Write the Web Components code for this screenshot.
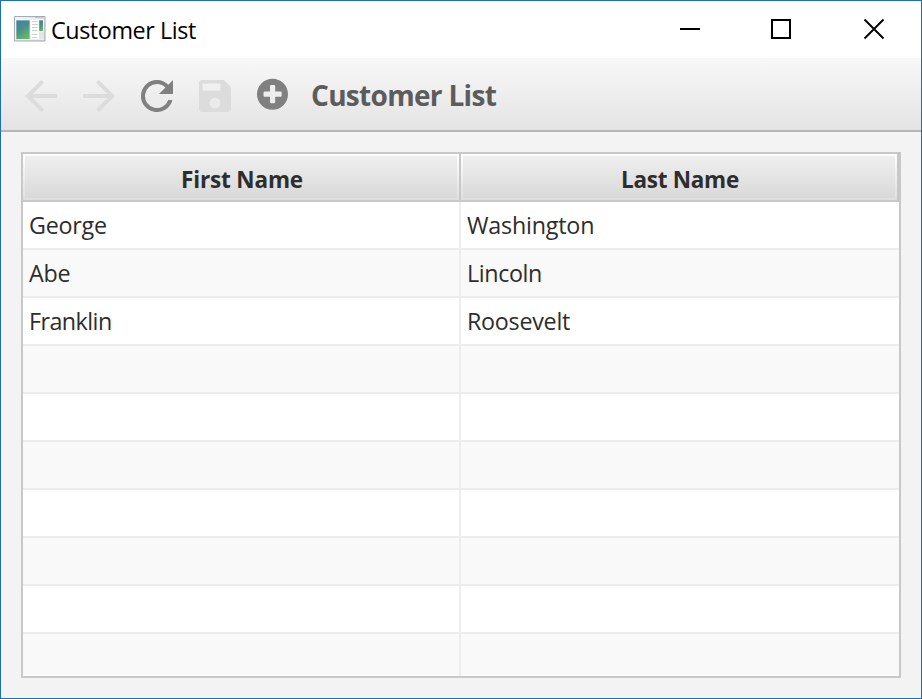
<!DOCTYPE html>
<html lang="en"><head><meta charset="utf-8"><title>Customer List</title>
<style>html,body{margin:0;height:100%}body{font-family:"Open Sans","Noto Sans",sans-serif;overflow:hidden}</style></head>
<body>
<app-window>
  <title-bar slot="title"><span>Customer List</span></title-bar>
  <tool-bar slot="tools"><span>Customer List</span></tool-bar>
  <data-table></data-table>
</app-window>
<script>
const define = (name, html, setup) => customElements.define(name, class extends HTMLElement {
  constructor() {
    super();
    this.attachShadow({mode: 'open'}).innerHTML = html;
    if (setup) setup(this.shadowRoot);
  }
});

define('title-bar', `<style>
:host{display:flex;height:57px;align-items:flex-start;background:#fff;color:#000;font-size:23.3px}
.app{margin:15px 5px 0 13px;width:32px;height:26px;flex:none}
.label{letter-spacing:-.4px;white-space:nowrap;line-height:59px}
.buttons{margin-left:auto;display:flex;height:57px}
</style>
<svg class="app" viewBox="0 0 32 26">
<defs><linearGradient id="a" x2=".5" y2="1"><stop stop-color="#477cab"/><stop offset=".5" stop-color="#478f8c"/><stop offset="1" stop-color="#65b56c"/></linearGradient>
<linearGradient id="b" x2="1" y2="1"><stop stop-color="#f4f5f7"/><stop offset="1" stop-color="#d3d6dc"/></linearGradient></defs>
<path fill="url(#b)" stroke="#a6aab0" d="M.5.5h30.500v24.500H.5z"/><path fill="#c3c6cc" d="M21 1h9v1h-9z"/>
<path fill="#fff" d="M1.500 3.500h15v20.500h-15zM17 3.500h13v20H17z"/><path fill="#e4e6ea" d="M25 16h5v7h-5z"/>
<path fill="url(#a)" d="M2.300 4.300h13.400v18.900H2.300z"/><path fill="url(#a)" d="M25.200 4.300H29v10.900h-3.800z"/>
<path stroke="#cdd0d5" d="M18 5.500h5.500m-5.500 3h5.500m-5.500 3h5.500m-5.500 3h5.500m-5.500 4h5.500m-5.500 3h5.500"/></svg>
<span class="label"><slot></slot></span>
<div class="buttons"><svg width="250" height="57" fill="none" stroke="#000" stroke-width="2"><path d="M9 28h20M101 19h18v18h-18z"/><path d="M193.500 18.500l19 19m0-19l-19 19" stroke-width="1.900"/></svg></div>`);

define('tool-bar', `<style>
:host{display:flex;box-sizing:border-box;height:74px;padding:20px 0 0 23px;border-bottom:2px solid #b5b5b5;background:linear-gradient(#f8f8f8,#e4e4e4);color:#5c5c5c;font-size:28px;font-weight:700}
svg{flex:none;width:34px;height:34px;margin-right:24px;fill:#808080}
.off{fill:#dcdcdc}
.add{margin-right:21px}
.label{line-height:34px;letter-spacing:-.69px;white-space:nowrap}
</style>
<svg class="off" viewBox="3.400 3 17 17"><path d="M20 11H7.830l5.590-5.590L12 4l-8 8 8 8 1.410-1.410L7.830 13H20v-2z"/></svg>
<svg class="off" viewBox="3.500 3 17 17"><path d="M12 4l-1.410 1.410L16.170 11H4v2h12.170l-5.580 5.590L12 20l8-8z"/></svg>
<svg viewBox="3.500 3 17 17"><path d="M17.650 6.350A7.960 7.960 0 0 0 12 4a8 8 0 1 0 7.730 10h-2.080A6 6 0 1 1 12 6c1.660 0 3.140.69 4.220 1.780L13 11h7V4l-2.350 2.350z"/></svg>
<svg class="off" viewBox="2.440 1.880 19.120 19.120"><path d="M17 3H5a2 2 0 0 0-2 2v14a2 2 0 0 0 2 2h14a2 2 0 0 0 2-2V7l-4-4zm-5 16a3 3 0 1 1 0-6 3 3 0 0 1 0 6zm3-10H5V5h10v4z"/></svg>
<svg class="add" viewBox="0 0 34 34"><path fill-rule="evenodd" d="M16.500 .7a15.500 15.500 0 1 0 0 31 15.500 15.500 0 0 0 0-31zM15.300 7h2.600q1.300 0 1.300 1.300v5.200h5.200q1.300 0 1.300 1.300v2.600q0 1.300-1.300 1.300h-5.200v5.200q0 1.300-1.300 1.300h-2.600q-1.300 0-1.300-1.300v-5.200H8.800q-1.300 0-1.300-1.300v-2.600q0-1.300 1.300-1.300H14V8.300Q14 7 15.300 7z"/></svg>
<span class="label"><slot></slot></span>`);

define('table-cell', `<style>
:host{display:block;box-sizing:border-box;height:48px;padding-left:6px;border-right:2px solid #ededed;border-bottom:2px solid #ededed;line-height:47px;font-size:23.3px;white-space:nowrap;color:#2d2d2d}
:host([last]){border-right:0}
</style><slot></slot>`);

define('header-cell', `<style>
:host{display:block;box-sizing:border-box;height:48px;border-right:2px solid #c8c8c8;border-bottom:2px solid #c8c8c8;background:linear-gradient(#fff,#dfdfdf);padding:2px}
div{height:42px;background:linear-gradient(#efefef,#d9d9d9);text-align:center;font-weight:700;font-size:22.500px;line-height:48px;color:#2d2d2d;white-space:nowrap;text-indent:2px}
</style><div><slot></slot></div>`);

define('data-table', `<style>
:host{display:grid;box-sizing:border-box;width:880px;height:526px;border:2px solid #c8c8c8;overflow:hidden;grid-template-columns:438px 438px;grid-auto-rows:48px;background:#fff}
.alt{background:#f9f9f9}
</style>`, root => {
  const cell = (text, ls, tag, cls, last) => {
    const el = document.createElement(tag);
    el.textContent = text; el.className = cls; el.style.letterSpacing = ls + 'px';
    if (last) el.setAttribute('last', '');
    root.append(el);
  };
  cell('First Name', -.15, 'header-cell', '');
  cell('Last Name', -.27, 'header-cell', '');
  const rows = [['George', -.25, 'Washington', -.2], ['Abe', -.2, 'Lincoln', -.4], ['Franklin', -.55, 'Roosevelt', -.27]];
  for (let i = 0; i < 10; i++) {
    const [a, x, b, y] = rows[i] || ['', 0, '', 0];
    const cls = i % 2 ? 'alt' : '';
    cell(a, x, 'table-cell', cls);
    cell(b, y, 'table-cell', cls, true);
  }
});

define('app-window', `<style>
:host{display:flex;flex-direction:column;box-sizing:border-box;width:922px;height:699px;border:1px solid #1a6fb5;background:#f3f3f3}
main{padding:20px}
</style><slot name="title"></slot><slot name="tools"></slot><main><slot></slot></main>`);
</script>
</body></html>
